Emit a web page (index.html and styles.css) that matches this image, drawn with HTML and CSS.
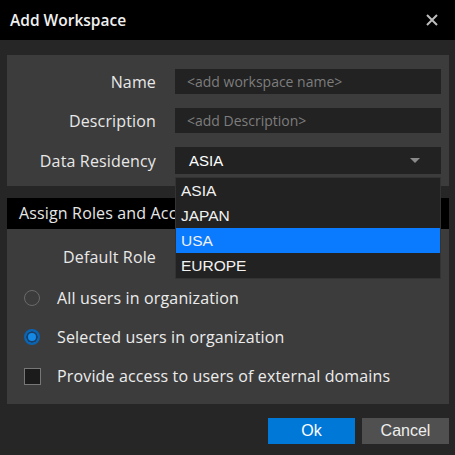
FILE: index.html
```html
<!DOCTYPE html>
<html lang="en">
<head>
    <meta charset="UTF-8">
    <title>Add Workspace</title>
    <link rel="stylesheet" href="styles.css">
</head>
<body>
    <div class="dialog">
        <div class="title-bar">
            <span class="title">Add Workspace</span>
            <svg class="close" width="12" height="12" viewBox="0 0 12 12">
                <path d="M1 1 L11 11 M11 1 L1 11" stroke="#bdbdbd" stroke-width="2" fill="none"/>
            </svg>
        </div>

        <div class="content">
            <div class="panel form-panel">
                <label class="label">Name</label>
                <div class="input placeholder">&lt;add workspace name&gt;</div>

                <label class="label">Description</label>
                <div class="input placeholder">&lt;add Description&gt;</div>

                <label class="label">Data Residency</label>
                <div class="select-wrap">
                    <div class="select">
                        <span>ASIA</span>
                        <span class="arrow"></span>
                    </div>
                    <ul class="dropdown">
                        <li>ASIA</li>
                        <li>JAPAN</li>
                        <li class="active">USA</li>
                        <li>EUROPE</li>
                    </ul>
                </div>
            </div>

            <div class="section-head">Assign Roles and Access</div>
            <div class="panel access-panel">
                <div class="role-row">
                    <label class="label">Default Role</label>
                    <div class="select"><span></span><span class="arrow"></span></div>
                </div>
                <div class="option"><span class="radio"></span>All users in organization</div>
                <div class="option"><span class="radio checked"></span>Selected users in organization</div>
                <div class="option"><span class="checkbox"></span>Provide access to users of external domains</div>
            </div>
        </div>

        <div class="footer">
            <button class="btn btn-ok">Ok</button>
            <button class="btn btn-cancel">Cancel</button>
        </div>
    </div>
</body>
</html>
```

FILE: styles.css
```css
* { margin: 0; padding: 0; box-sizing: border-box; }
body {
    font-family: 'Open Sans', sans-serif;
    background: #262626;
    color: #e6e6e6;
    width: 455px;
    height: 455px;
    overflow: hidden;
}
.dialog { width: 455px; height: 455px; }
.title-bar {
    height: 40px;
    background: #000;
    display: flex;
    align-items: center;
    justify-content: space-between;
    padding: 0 17px 0 10px;
}
.title { font-size: 15.5px; font-weight: 600; color: #f0f0f0; }
.content { padding: 15px 6px 0 7px; }
.panel { background: #3c3c3c; }
.label {
    font-size: 16px;
    letter-spacing: 0.15px;
    color: #e8e8e8;
    text-align: right;
    padding-right: 19px;
}
.form-panel {
    display: grid;
    grid-template-columns: 168px 266px;
    align-items: center;
    row-gap: 14px;
    padding: 14px 0 12px;
}
.input {
    height: 25px;
    background: #222;
    font-size: 14px;
    line-height: 25px;
    padding-left: 12px;
}
.placeholder { color: #7d7d7d; }
.select-wrap { position: relative; }
.select {
    height: 27px;
    background: #222;
    display: flex;
    align-items: center;
    justify-content: space-between;
    padding: 0 21px 0 14px;
    font-family: 'Liberation Sans', Arial, sans-serif;
    font-size: 15px;
    color: #fff;
}
.arrow {
    width: 0;
    height: 0;
    border-left: 5px solid transparent;
    border-right: 5px solid transparent;
    border-top: 5px solid #8a8a8a;
}
/* open list lies over the roles heading */
.dropdown {
    position: absolute;
    top: 30px;
    left: 0;
    width: 266px;
    list-style: none;
    background: #222;
    border: 1px solid #333;
    z-index: 2;
}
.dropdown li {
    height: 25px;
    line-height: 25px;
    padding-left: 5px;
    font-family: 'Liberation Sans', Arial, sans-serif;
    font-size: 15.5px;
    color: #f2f2f2;
}
.dropdown li.active { background: #0a7bff; }
.section-head {
    margin-top: 12px;
    height: 31px;
    background: #000;
    font-size: 16px;
    letter-spacing: 0.15px;
    line-height: 31px;
    padding-left: 12px;
    white-space: nowrap;
}
.access-panel { height: 175px; padding-top: 14px; }
.role-row {
    display: grid;
    grid-template-columns: 168px 266px;
    align-items: center;
    margin-bottom: 16px;
}
.option {
    display: flex;
    align-items: center;
    height: 24px;
    margin-bottom: 15px;
    padding-left: 17px;
    font-size: 16px;
    letter-spacing: 0.15px;
    color: #ececec;
}
.radio {
    width: 16px;
    height: 16px;
    border: 1.5px solid #6a6a6a;
    border-radius: 50%;
    margin-right: 17px;
}
.radio.checked {
    border: 2px solid #0a64b4;
    background: #1589e6;
    box-shadow: inset 0 0 0 2px #1a3f66;
}
.checkbox {
    width: 17px;
    height: 17px;
    border: 1.5px solid #777;
    background: #1b1b1b;
    margin-right: 16px;
}
.footer {
    display: flex;
    justify-content: flex-end;
    gap: 7px;
    padding: 14px 6px 0 0;
}
.btn {
    width: 87px;
    height: 26px;
    border: none;
    font-family: 'Liberation Sans', Arial, sans-serif;
    font-size: 16px;
    color: #fff;
}
.btn-ok { background: #0078d7; }
.btn-cancel { background: #505050; color: #eee; }
```
